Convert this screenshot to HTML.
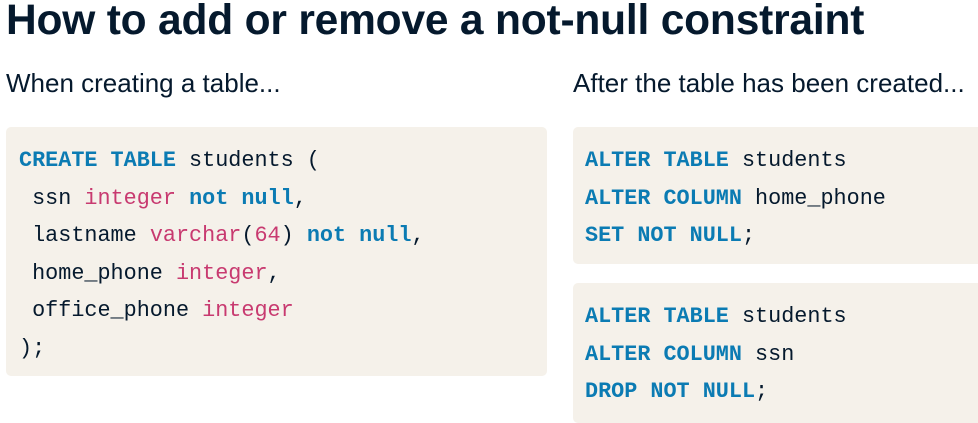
<!DOCTYPE html>
<html><head><style>
body{margin:0;width:978px;height:409px;background:#fff;overflow:hidden;position:relative;font-family:"Liberation Sans",sans-serif;color:#05192d}
h1{position:absolute;left:6px;top:-3px;margin:0;font-size:42.5px;font-weight:bold;white-space:nowrap;letter-spacing:-0.2px}
.sub{position:absolute;top:68px;font-size:26px;white-space:nowrap}
.box{position:absolute;background:#f5f1ea;border-radius:5px}
pre{margin:0;font-family:"Liberation Mono",monospace;font-size:21.8px;line-height:37.5px;color:#05192d}
.k{color:#0b7bb3;font-weight:bold}
.t{color:#c83a70}
</style></head><body>
<h1>How to add or remove a not-null constraint</h1>
<div class="sub" style="left:6px">When creating a table...</div>
<div class="sub" style="left:573px">After the table has been created...</div>
<div class="box" style="left:6px;top:127px;width:541px;height:249px">
<pre style="position:absolute;left:13px;top:15px"><span class="k">CREATE TABLE</span> students (
 ssn <span class="t">integer</span> <span class="k">not null</span>,
 lastname <span class="t">varchar</span>(<span class="t">64</span>) <span class="k">not null</span>,
 home_phone <span class="t">integer</span>,
 office_phone <span class="t">integer</span>
);</pre></div>
<div class="box" style="left:573px;top:127px;width:410px;height:137px">
<pre style="position:absolute;left:12px;top:15px"><span class="k">ALTER TABLE</span> students
<span class="k">ALTER COLUMN</span> home_phone
<span class="k">SET NOT NULL</span>;</pre></div>
<div class="box" style="left:573px;top:283px;width:410px;height:140px">
<pre style="position:absolute;left:12px;top:15px"><span class="k">ALTER TABLE</span> students
<span class="k">ALTER COLUMN</span> ssn
<span class="k">DROP NOT NULL</span>;</pre></div>
</body></html>
